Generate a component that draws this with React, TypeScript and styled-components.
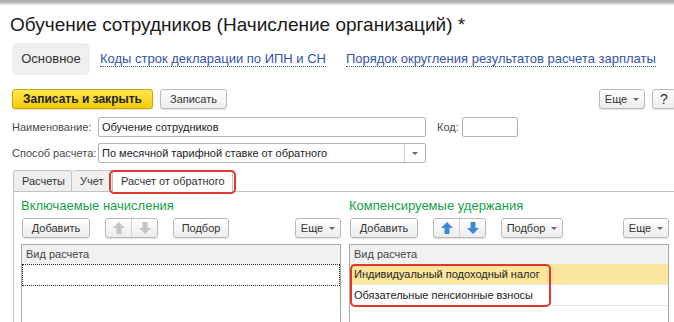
import styled, { createGlobalStyle } from 'styled-components';

const GlobalStyle = createGlobalStyle`
  html, body {
    margin: 0;
    padding: 0;
    background: #ffffff;
    overflow: hidden;
  }
`;

function Caret() {
  return <CaretMark />;
}

function MoveArrow({ dir, active }: { dir: 'up' | 'down'; active: boolean }) {
  const fill = active ? '#3a8ad6' : '#c4c4c4';
  const points =
    dir === 'up' ? '7,1 13,7 9.5,7 9.5,13 4.5,13 4.5,7 1,7' : '7,13 13,7 9.5,7 9.5,1 4.5,1 4.5,7 1,7';
  return (
    <svg width="14" height="14" viewBox="0 0 14 14">
      <polygon points={points} fill={fill} />
    </svg>
  );
}

function Column({
  title,
  active,
  pickCaret,
  children,
}: {
  title: string;
  active: boolean;
  pickCaret: boolean;
  children: React.ReactNode;
}) {
  return (
    <div>
      <SectionTitle>{title}</SectionTitle>
      <CommandBar>
        <Button $width={68}>Добавить</Button>
        <ArrowGroup>
          <ArrowButton>
            <MoveArrow dir="up" active={active} />
          </ArrowButton>
          <ArrowButton>
            <MoveArrow dir="down" active={active} />
          </ArrowButton>
        </ArrowGroup>
        <Button $width={pickCaret ? 62 : 56}>
          Подбор
          {pickCaret && <Caret />}
        </Button>
        <Spacer />
        <Button $width={46}>
          Еще
          <Caret />
        </Button>
      </CommandBar>
      <Grid>
        <GridHeader>Вид расчета</GridHeader>
        {children}
      </Grid>
    </div>
  );
}

export default function App() {
  return (
    <Page>
      <GlobalStyle />
      <TopShade />
      <Title>Обучение сотрудников (Начисление организаций) *</Title>
      <NavRow>
        <MainSection>Основное</MainSection>
        <NavLink $gap={10}>Коды строк декларации по ИПН и СН</NavLink>
        <NavLink $gap={20}>Порядок округления результатов расчета зарплаты</NavLink>
      </NavRow>
      <Toolbar>
        <PrimaryButton>Записать и закрыть</PrimaryButton>
        <Button $width={67}>Записать</Button>
        <Spacer />
        <Button $width={46}>
          Еще
          <Caret />
        </Button>
        <HelpButton>?</HelpButton>
      </Toolbar>
      <FormRow $top={8}>
        <Label>Наименование:</Label>
        <TextField $width={328}>Обучение сотрудников</TextField>
        <CodeLabel>Код:</CodeLabel>
        <TextField $width={56} />
      </FormRow>
      <FormRow $top={6}>
        <Label>Способ расчета:</Label>
        <SelectField>
          <SelectText>По месячной тарифной ставке от обратного</SelectText>
          <SelectButton>
            <Caret />
          </SelectButton>
        </SelectField>
      </FormRow>
      <TabStrip>
        <Tab $width={59}>Расчеты</Tab>
        <Tab $width={41}>Учет</Tab>
        <Tab $width={120} $active>
          Расчет от обратного
        </Tab>
      </TabStrip>
      <Panel>
        <Column title="Включаемые начисления" active={false} pickCaret={false}>
          <FocusRow />
        </Column>
        <Column title="Компенсируемые удержания" active pickCaret>
          <RowGroup>
            <Row $selected>Индивидуальный подоходный налог</Row>
            <Row>Обязательные пенсионные взносы</Row>
            <Highlight />
          </RowGroup>
        </Column>
      </Panel>
    </Page>
  );
}

const Page = styled.div`
  width: 676px;
  height: 322px;
  font-family: 'Liberation Sans', Arial, sans-serif;
  font-size: 11px;
  color: #333333;
`;

const TopShade = styled.div`
  height: 5px;
  background: linear-gradient(#a8a8a8 0%, #bdbdbd 50%, #f2f2f2 100%);
`;

const Title = styled.h1`
  margin: 8px 0 0 10px;
  font-size: 19px;
  line-height: 24px;
  font-weight: normal;
  color: #1a1a1a;
  white-space: nowrap;
`;

const NavRow = styled.div`
  display: flex;
  align-items: center;
  margin-top: 6px;
  padding-left: 12px;
  height: 32px;
`;

const MainSection = styled.div`
  width: 78px;
  height: 32px;
  line-height: 32px;
  text-align: center;
  background: #efefef;
  border-radius: 5px;
  font-size: 13px;
  color: #333333;
`;

const NavLink = styled.span<{ $gap: number }>`
  margin-left: ${(p) => p.$gap}px;
  font-size: 13px;
  color: #3552a8;
  border-bottom: 1px dotted #3552a8;
  line-height: 14px;
  white-space: nowrap;
`;

const Toolbar = styled.div`
  display: flex;
  align-items: center;
  gap: 7px;
  margin-top: 14px;
  padding-left: 12px;
  height: 20px;
`;

const Spacer = styled.div`
  flex: 1;
`;

const Button = styled.div<{ $width?: number }>`
  display: flex;
  align-items: center;
  justify-content: center;
  box-sizing: border-box;
  width: ${(p) => (p.$width ? `${p.$width}px` : 'auto')};
  flex: none;
  height: 20px;
  border: 1px solid #b9b9b9;
  border-radius: 3px;
  background: linear-gradient(#ffffff, #ececec);
  box-shadow: 0 1px 1px rgba(0, 0, 0, 0.12);
  color: #333333;
  white-space: nowrap;
`;

const PrimaryButton = styled(Button)`
  width: 141px;
  background: linear-gradient(#ffe94f, #f3cb08);
  border-color: #c9a700;
  font-size: 12px;
  font-weight: bold;
  color: #222222;
`;

const HelpButton = styled(Button)`
  width: 24px;
  font-size: 14px;
`;

const CaretMark = styled.span`
  display: inline-block;
  margin-left: 6px;
  width: 0;
  height: 0;
  border-left: 3px solid transparent;
  border-right: 3px solid transparent;
  border-top: 3px solid #666666;
`;

const FormRow = styled.div<{ $top: number }>`
  display: flex;
  align-items: center;
  margin-top: ${(p) => p.$top}px;
  padding-left: 12px;
  height: 20px;
`;

const Label = styled.div`
  width: 86px;
  color: #4a4a4a;
  white-space: nowrap;
`;

const CodeLabel = styled.div`
  margin: 0 5px 0 11px;
  width: 20px;
  color: #4a4a4a;
`;

const TextField = styled.div<{ $width: number }>`
  box-sizing: border-box;
  width: ${(p) => p.$width}px;
  height: 20px;
  line-height: 18px;
  padding-left: 3px;
  border: 1px solid #b3b3b3;
  border-radius: 2px;
  color: #222222;
  white-space: nowrap;
`;

const SelectField = styled.div`
  display: flex;
  box-sizing: border-box;
  width: 328px;
  height: 20px;
  border: 1px solid #b3b3b3;
  border-radius: 2px;
`;

const SelectText = styled.div`
  flex: 1;
  line-height: 18px;
  padding-left: 3px;
  color: #222222;
  white-space: nowrap;
`;

const SelectButton = styled.div`
  display: flex;
  align-items: center;
  justify-content: center;
  width: 20px;
  border-left: 1px solid #c8c8c8;

  & > span {
    margin-left: 0;
  }
`;

const TabStrip = styled.div`
  display: flex;
  align-items: flex-end;
  margin: 7px 0 0 13px;
  height: 21px;
  border-bottom: 1px solid #c4c4c4;
`;

const Tab = styled.div<{ $width: number; $active?: boolean }>`
  position: relative;
  box-sizing: border-box;
  width: ${(p) => p.$width}px;
  height: ${(p) => (p.$active ? 22 : 21)}px;
  margin-bottom: ${(p) => (p.$active ? -1 : 0)}px;
  padding-left: 8px;
  line-height: 20px;
  border: 1px solid #c4c4c4;
  border-bottom: none;
  border-left-width: ${(p) => (p.$active ? 0 : 1)}px;
  border-radius: 3px 3px 0 0;
  background: ${(p) => (p.$active ? '#ffffff' : '#efefef')};
  color: #333333;
  white-space: nowrap;

  &:nth-child(2) {
    border-left: none;
  }

  ${(p) =>
    p.$active &&
    `
    &::after {
      content: '';
      position: absolute;
      left: -4px;
      top: -1px;
      right: -4px;
      bottom: -2px;
      border: 2px solid #e2382c;
      border-radius: 5px;
    }
  `}
`;

const Panel = styled.div`
  display: grid;
  grid-template-columns: 320px 320px;
  column-gap: 8px;
  margin-left: 13px;
  padding: 6px 0 0 7px;
  border-left: 1px solid #c4c4c4;
`;

const SectionTitle = styled.div`
  font-size: 13px;
  line-height: 16px;
  color: #16a04c;
  margin-bottom: 4px;
  white-space: nowrap;
`;

const CommandBar = styled.div`
  display: flex;
  align-items: center;
  gap: 15px;
  height: 20px;
  padding-left: 1px;
`;

const ArrowGroup = styled.div`
  display: flex;
  box-sizing: border-box;
  height: 20px;
  border: 1px solid #b9b9b9;
  border-radius: 3px;
  background: linear-gradient(#ffffff, #ececec);
  box-shadow: 0 1px 1px rgba(0, 0, 0, 0.12);
`;

const ArrowButton = styled.div`
  display: flex;
  align-items: center;
  justify-content: center;
  width: 25px;

  & + & {
    border-left: 1px solid #cfcfcf;
  }
`;

const Grid = styled.div`
  margin-top: 6px;
  height: 80px;
  border: 1px solid #a9a9a9;
  border-bottom: none;
`;

const GridHeader = styled.div`
  height: 19px;
  line-height: 19px;
  padding-left: 4px;
  background: #f1f1f1;
  color: #444444;
`;

const FocusRow = styled.div`
  height: 20px;
  border: 1px dotted #222222;
`;

const RowGroup = styled.div`
  position: relative;
`;

const Row = styled.div<{ $selected?: boolean }>`
  height: 20px;
  line-height: 20px;
  padding-left: 4px;
  background: ${(p) => (p.$selected ? '#fce69d' : '#ffffff')};
  border-bottom: 1px solid #e6e6e6;
  font-size: 11px;
  color: #222222;
  white-space: nowrap;
`;

const Highlight = styled.div`
  position: absolute;
  left: 0;
  top: 0;
  width: 201px;
  height: 43px;
  box-sizing: border-box;
  border: 2px solid #e2382c;
  border-radius: 5px;
`;
